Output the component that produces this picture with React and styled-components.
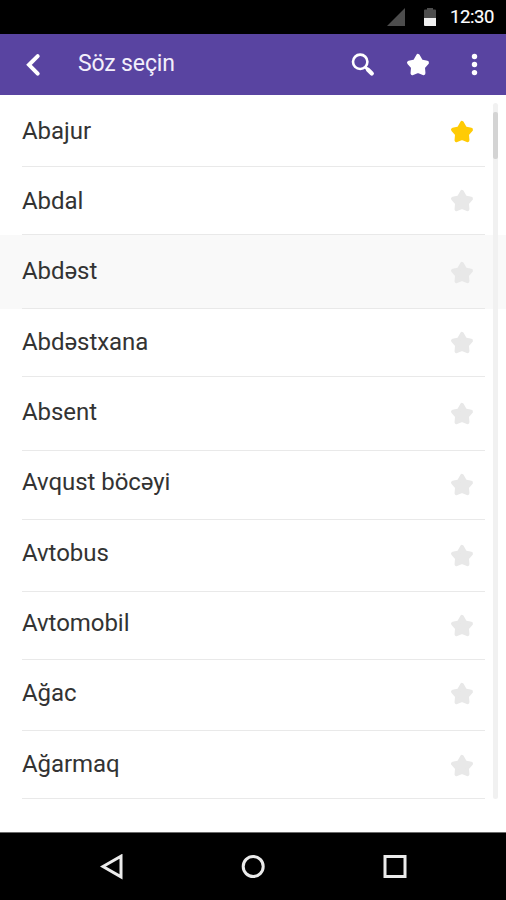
import React from "react";
import styled, { createGlobalStyle } from "styled-components";

const GlobalStyle = createGlobalStyle`
  * { box-sizing: border-box; }
  body { margin: 0; background: #fff; font-family: Roboto, sans-serif; }
`;

const Screen = styled.div`
  width: 506px;
  height: 900px;
  display: flex;
  flex-direction: column;
  overflow: hidden;
  background: #fff;
`;

const StatusBar = styled.header`
  height: 34px;
  flex: none;
  display: flex;
  align-items: flex-start;
  justify-content: flex-end;
  padding: 8px 12px 0 0;
  background: #000;
  color: #fff;
`;

const Signal = styled.svg`
  display: block;
  margin-right: 19px;
`;

const Battery = styled.svg`
  display: block;
  margin-right: 14px;
`;

const Clock = styled.span`
  width: 44px;
  font-size: 18.5px;
  font-weight: 400;
  line-height: 19px;
  letter-spacing: -0.4px;
  white-space: nowrap;
  -webkit-text-stroke: 0.15px currentColor;
`;

const Toolbar = styled.nav`
  height: 61px;
  flex: none;
  display: flex;
  align-items: center;
  padding: 0 20px 0 21px;
  background: #5944a1;
  color: #fff;
`;

const Title = styled.h1`
  flex: 1;
  margin: 0 0 2px 33px;
  font-size: 23px;
  font-weight: 400;
  line-height: 28px;
  letter-spacing: -0.15px;
  color: #f3effb;
`;

const IconButton = styled.button`
  width: 24px;
  height: 24px;
  padding: 0;
  border: 0;
  background: none;
  color: inherit;
  margin-left: ${(p) => p.$gap || 0}px;

  svg { display: block; }
`;

const ListArea = styled.main`
  position: relative;
  height: 737px;
  flex: none;
`;

const List = styled.ul`
  list-style: none;
  margin: 0;
  padding: 0;
`;

const Row = styled.li`
  height: ${(p) => p.$height}px;
  padding: 0 21px 0 22px;
  background: ${(p) => (p.$active ? "#f9f9f9" : "#fff")};
`;

const RowContent = styled.div`
  height: 100%;
  display: flex;
  align-items: flex-start;
  justify-content: space-between;
  padding-right: 11px;
  border-bottom: 1px solid #e9e9e9;
`;

const Word = styled.span`
  margin-top: ${(p) => p.$top}px;
  font-size: 24px;
  line-height: 28px;
  letter-spacing: -0.05px;
  color: #333;
  white-space: nowrap;
`;

const Favorite = styled.span`
  flex: none;
  margin-top: ${(p) => p.$top}px;
  color: ${(p) => (p.$on ? "#ffcb05" : "#e8e8e8")};

  svg { display: block; }
`;

const ScrollTrack = styled.div`
  position: absolute;
  top: 8px;
  right: 8px;
  width: 5px;
  height: 696px;
  padding-top: 9px;
  border-radius: 3px;
  background: #f1f1f1;
`;

const ScrollThumb = styled.div`
  height: 47px;
  border-radius: 2px;
  background: #d4d4d4;
`;

const NavBar = styled.footer`
  flex: 1;
  display: flex;
  align-items: flex-start;
  justify-content: space-between;
  padding: 21px 98px 0 99px;
  background: #000;
  border-top: 1px solid #6b6b6b;
`;

const NavIcon = styled.svg`
  display: block;
  fill: none;
  stroke: #ebebeb;
  stroke-width: 3;
`;

const StarIcon = () => (
  <svg width="24" height="24" viewBox="0 0 24 24">
    <path
      d="M12 2.9 15 8.3 21 9.7 17 14.2 17.5 20.2 12 17.9 6.5 20.2 7 14.2 3 9.7 9 8.3Z"
      fill="currentColor"
      stroke="currentColor"
      strokeWidth="3.9"
      strokeLinejoin="round"
    />
  </svg>
);

/* end: bottom edge of the row; baseline and star: vertical positions on the screen */
const LIST_TOP = 95;
const words = [
  { text: "Abajur", end: 167, baseline: 139, star: 132, favorite: true },
  { text: "Abdal", end: 235, baseline: 209, star: 201 },
  { text: "Abdəst", end: 309, baseline: 279.4, star: 273, active: true },
  { text: "Abdəstxana", end: 377, baseline: 350, star: 343.5 },
  { text: "Absent", end: 451, baseline: 420, star: 414 },
  { text: "Avqust böcəyi", end: 520, baseline: 490.4, star: 485 },
  { text: "Avtobus", end: 592, baseline: 561, star: 556 },
  { text: "Avtomobil", end: 660, baseline: 631, star: 626 },
  { text: "Ağac", end: 731, baseline: 701.4, star: 694.5 },
  { text: "Ağarmaq", end: 799, baseline: 772, star: 766 },
];

export default function App() {
  return (
    <>
      <GlobalStyle />
      <Screen>
        <StatusBar>
          <Signal width="18" height="18" viewBox="0 0 18 18">
            <path d="M18 0V18H0Z" fill="#4d4d4d" />
          </Signal>
          <Battery width="12" height="18" viewBox="0 0 12 18">
            <path d="M3 0H9V1.5H11Q12 1.5 12 2.5V10H0V2.5Q0 1.5 1 1.5H3Z" fill="#4d4d4d" />
            <path d="M0 10H12V18H1Q0 18 0 17Z" fill="#f0f0f0" />
          </Battery>
          <Clock>12:30</Clock>
        </StatusBar>
        <Toolbar>
          <IconButton aria-label="Back">
            <svg width="24" height="24" viewBox="0 0 24 24">
              <path d="M16.7 3.2 8 11.8 16.7 20.6" fill="none" stroke="currentColor" strokeWidth="4" strokeLinejoin="miter" strokeLinecap="round" />
            </svg>
          </IconButton>
          <Title>Söz seçin</Title>
          <IconButton aria-label="Search">
            <svg width="24" height="24" viewBox="0 0 24 24" fill="none" stroke="currentColor">
              <circle cx="9.2" cy="8.8" r="7.2" strokeWidth="2.6" />
              <path d="M14 13.8 17 16.8" strokeWidth="3" />
              <path d="M17 16.8 20.8 20.6" strokeWidth="4.2" strokeLinecap="round" />
            </svg>
          </IconButton>
          <IconButton aria-label="Favorites" $gap={31}>
            <StarIcon />
          </IconButton>
          <IconButton aria-label="More" $gap={32}>
            <svg width="24" height="24" viewBox="0 0 24 24" fill="currentColor">
              <circle cx="12.5" cy="3.5" r="2.7" />
              <circle cx="12.5" cy="11.5" r="2.7" />
              <circle cx="12.5" cy="19.6" r="2.7" />
            </svg>
          </IconButton>
        </Toolbar>
        <ListArea>
          <List>
            {words.map((w, i) => {
              const top = i ? words[i - 1].end : LIST_TOP;
              return (
                <Row key={w.text} $height={w.end - top} $active={w.active}>
                  <RowContent>
                    <Word $top={w.baseline - top - 22}>{w.text}</Word>
                    <Favorite $top={w.star - top - 12.5} $on={w.favorite}>
                      <StarIcon />
                    </Favorite>
                  </RowContent>
                </Row>
              );
            })}
          </List>
          <ScrollTrack>
            <ScrollThumb />
          </ScrollTrack>
        </ListArea>
        <NavBar>
          <NavIcon width="26" height="26" viewBox="0 0 26 26">
            <path d="M4 12.5 22 2.2V22.8Z" />
          </NavIcon>
          <NavIcon width="26" height="26" viewBox="0 0 26 26">
            <circle cx="12.2" cy="12.5" r="10" />
          </NavIcon>
          <NavIcon width="26" height="26" viewBox="0 0 26 26">
            <rect x="3" y="2.5" width="20" height="20" />
          </NavIcon>
        </NavBar>
      </Screen>
    </>
  );
}
